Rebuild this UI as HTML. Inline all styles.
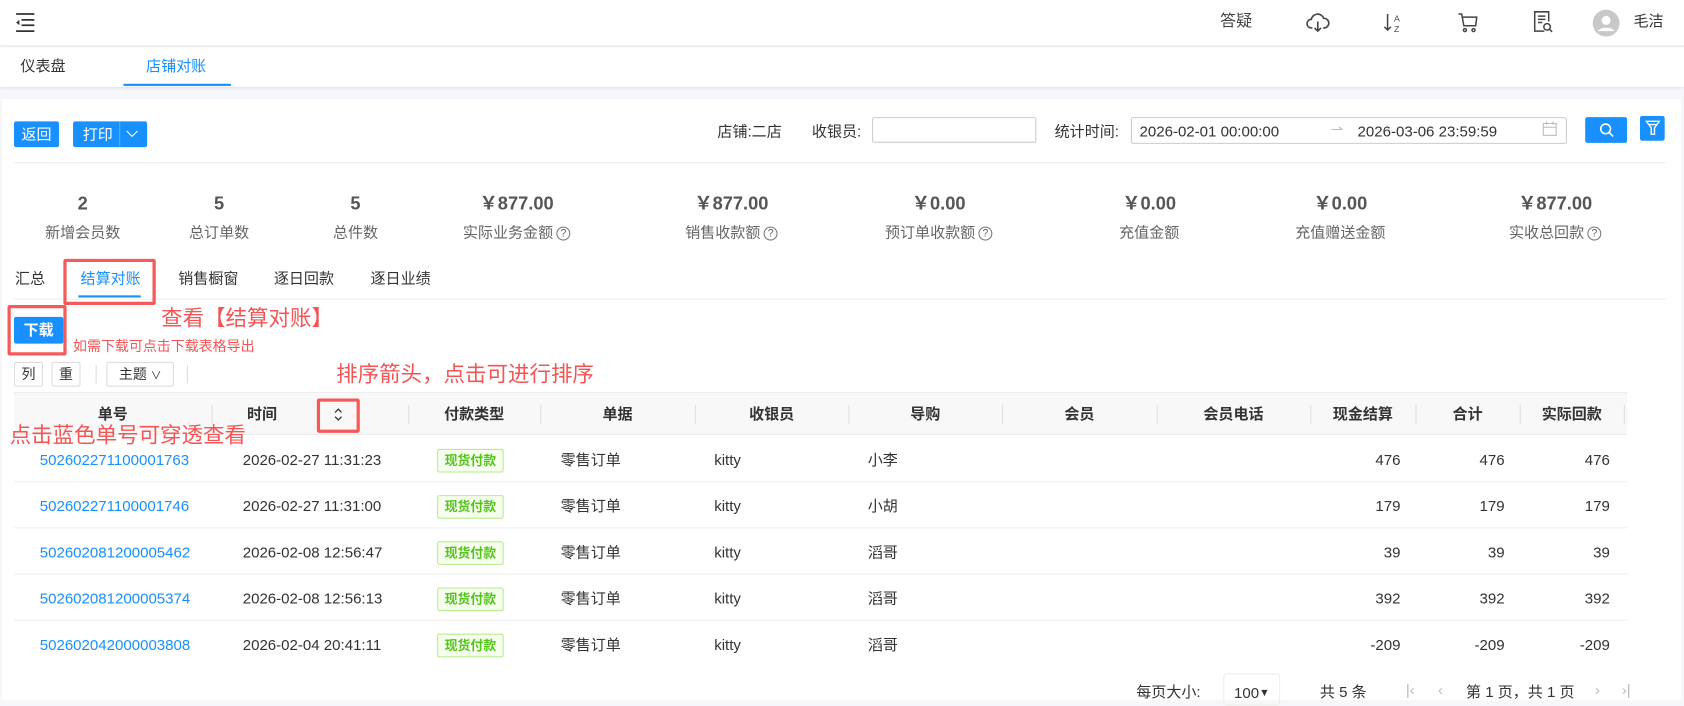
<!DOCTYPE html>
<html><head><meta charset="utf-8">
<style>
*{box-sizing:border-box;margin:0;padding:0}
html,body{width:1684px;height:699px;overflow:hidden;background:#f5f7fa}
#w{position:absolute;left:0;top:0;width:1568px;height:651px;transform:scale(1.07398);transform-origin:0 0;font-family:"Liberation Sans","Noto Sans CJK SC",sans-serif;font-size:14px;color:#333;line-height:1.2}
.a{position:absolute;white-space:nowrap}
.btn{position:absolute;background:#1890ff;color:#fff;border-radius:2px;text-align:center;font-size:14px}
.red{position:absolute;border:3px solid #f55a5a;border-radius:2px}
.rt{position:absolute;color:#f55454;white-space:nowrap}
.sc{position:absolute;width:160px;text-align:center}
.sc .n{font-size:17px;color:#555;font-weight:bold;height:22px}
.sc .l{font-size:14px;color:#666;margin-top:6px}
.q{display:inline-block;width:13px;height:13px;border:1px solid #777;border-radius:50%;font-size:10px;line-height:11px;text-align:center;vertical-align:1px;margin-left:3px}
.th{position:absolute;top:365px;height:40px;line-height:40px;font-weight:bold;text-align:center;font-size:14px;color:#333}
.sep{position:absolute;top:377px;width:1px;height:18px;background:#e0e0e0}
.tag{position:absolute;border:1px solid #b7eb8f;background:#f6ffed;color:#52c41a;font-size:12px;font-weight:bold;height:22px;line-height:20px;padding:0 6px;border-radius:2px}
.tb{position:absolute;height:23px;border:1px solid #ddd;border-radius:2px;background:#fff;font-size:13px;line-height:21px;text-align:center}
</style></head><body><div id="w">
<div class="a" style="left:0;top:0;width:1568px;height:42px;background:#fff;box-shadow:0 1px 3px rgba(0,0,0,.08)"></div>
<svg class="a" style="left:14px;top:11px" width="20" height="20" viewBox="0 0 20 20"><path d="M1 2h17M6 7.5h12M6 12.5h12M1 18h17" stroke="#333" stroke-width="1.6"/><path d="M1 10l3-2.5v5z" fill="#333"/></svg>
<div class="a" style="left:1136px;top:11px;font-size:15px;color:#444">答疑</div>
<svg class="a" style="left:1216px;top:10px" width="22" height="22" viewBox="0 0 22 22" fill="none" stroke="#444" stroke-width="1.5"><path d="M6 16H5a4 4 0 0 1 0-8 6 6 0 0 1 11.5-1A4.5 4.5 0 0 1 17 16h-1"/><path d="M11 10v9M8 16l3 3 3-3"/></svg>
<svg class="a" style="left:1287px;top:10px" width="22" height="22" viewBox="0 0 22 22" fill="none" stroke="#444" stroke-width="1.4"><path d="M5 3v15M2 15l3 3 3-3"/><text x="11" y="10" font-size="8" fill="#444" stroke="none" font-family="Liberation Sans">A</text><text x="11" y="20" font-size="8" fill="#444" stroke="none" font-family="Liberation Sans">Z</text></svg>
<svg class="a" style="left:1356px;top:10px" width="22" height="22" viewBox="0 0 22 22" fill="none" stroke="#444" stroke-width="1.4"><path d="M2 3h3l2 11h11l1-8H6"/><circle cx="8" cy="18" r="1.4"/><circle cx="16" cy="18" r="1.4"/></svg>
<svg class="a" style="left:1426px;top:9px" width="22" height="24" viewBox="0 0 22 24" fill="none" stroke="#444" stroke-width="1.4"><path d="M12 20H3V2h13v9"/><path d="M6 6h7M6 9h7M6 12h4"/><circle cx="14.5" cy="16" r="3"/><path d="M16.7 18.2l2.5 2.5"/></svg>
<svg class="a" style="left:1483px;top:9px" width="25" height="25" viewBox="0 0 25 25"><circle cx="12.5" cy="12.5" r="12.5" fill="#c8c8c8"/><circle cx="12.5" cy="10" r="4.2" fill="#fff"/><path d="M4.5 20a9 6 0 0 1 16 0z" fill="#fff"/></svg>
<div class="a" style="left:1521px;top:11px;font-size:14px;color:#333">毛洁</div>
<div class="a" style="left:0;top:44px;width:1568px;height:37px;background:#fff;box-shadow:0 1px 3px rgba(0,0,0,.1)"></div>
<div class="a" style="left:19px;top:53px;font-size:14px;color:#333">仪表盘</div>
<div class="a" style="left:136px;top:53px;font-size:14px;color:#1890ff">店铺对账</div>
<div class="a" style="left:115px;top:78px;width:100px;height:2px;background:#1890ff"></div>
<div class="a" style="left:2px;top:92px;width:1563px;height:560px;background:#fff"></div>
<div class="btn" style="left:13px;top:113px;width:42px;height:24px;line-height:24px">返回</div>
<div class="btn" style="left:68px;top:113px;width:69px;height:24px;line-height:24px;text-align:left;padding-left:9px">打印<span style="position:absolute;left:43px;top:0;width:1px;height:24px;background:#5ab0ff"></span><svg style="position:absolute;left:49px;top:8px" width="12" height="8" viewBox="0 0 12 8"><path d="M1 1l5 5 5-5" stroke="#fff" fill="none"/></svg></div>
<div class="a" style="left:668px;top:114px">店铺:二店</div>
<div class="a" style="left:756px;top:114px">收银员:</div>
<div class="a" style="left:812px;top:109px;width:153px;height:24px;border:1px solid #ccc;border-radius:2px"></div>
<div class="a" style="left:982px;top:114px">统计时间:</div>
<div class="a" style="left:1053px;top:109px;width:406px;height:25px;border:1px solid #ccc;border-radius:2px"></div>
<div class="a" style="left:1061px;top:114px">2026-02-01 00:00:00</div>
<div class="a" style="left:1239px;top:112px;color:#bbb">⇀</div>
<div class="a" style="left:1264px;top:114px">2026-03-06 23:59:59</div>
<svg class="a" style="left:1436px;top:113px" width="14" height="15" viewBox="0 0 14 15" fill="none" stroke="#bbb"><rect x="1" y="2" width="12" height="11"/><path d="M1 5.5h12M4 0v3M10 0v3"/></svg>
<div class="btn" style="left:1476px;top:109px;width:39px;height:24px"><svg style="margin-top:5px" width="14" height="14" viewBox="0 0 14 14" fill="none" stroke="#fff" stroke-width="1.5"><circle cx="6" cy="6" r="4.5"/><path d="M9.5 9.5l3.5 3.5"/></svg></div>
<div class="btn" style="left:1527px;top:108px;width:23px;height:23px"><svg style="margin-top:4px" width="14" height="15" viewBox="0 0 14 15" fill="none" stroke="#fff" stroke-width="1.3"><path d="M1 1h12L8.5 7v6h-3V7z"/><path d="M3 4h8"/></svg></div>
<div class="a" style="left:13px;top:151px;width:1538px;height:1px;background:#eee"></div>
<div class="sc" style="left:-3px;top:180px"><div class="n">2</div><div class="l">新增会员数</div></div>
<div class="sc" style="left:124px;top:180px"><div class="n">5</div><div class="l">总订单数</div></div>
<div class="sc" style="left:251px;top:180px"><div class="n">5</div><div class="l">总件数</div></div>
<div class="sc" style="left:401px;top:180px"><div class="n">￥877.00</div><div class="l">实际业务金额<span class="q">?</span></div></div>
<div class="sc" style="left:601px;top:180px"><div class="n">￥877.00</div><div class="l">销售收款额<span class="q">?</span></div></div>
<div class="sc" style="left:794px;top:180px"><div class="n">￥0.00</div><div class="l">预订单收款额<span class="q">?</span></div></div>
<div class="sc" style="left:990px;top:180px"><div class="n">￥0.00</div><div class="l">充值金额</div></div>
<div class="sc" style="left:1168px;top:180px"><div class="n">￥0.00</div><div class="l">充值赠送金额</div></div>
<div class="sc" style="left:1368px;top:180px"><div class="n">￥877.00</div><div class="l">实收总回款<span class="q">?</span></div></div>
<div class="a" style="left:14px;top:251px">汇总</div>
<div class="a" style="left:75px;top:251px;color:#1890ff">结算对账</div>
<div class="a" style="left:73px;top:275px;width:58px;height:2px;background:#1890ff"></div>
<div class="a" style="left:166px;top:251px">销售橱窗</div>
<div class="a" style="left:255px;top:251px">逐日回款</div>
<div class="a" style="left:345px;top:251px">逐日业绩</div>
<div class="a" style="left:13px;top:278px;width:1538px;height:1px;background:#eee"></div>
<div class="red" style="left:59px;top:241px;width:86px;height:43px"></div>
<div class="rt" style="left:150px;top:285px;font-size:20px">查看【结算对账】</div>
<div class="btn" style="left:13px;top:295px;width:46px;height:25px;line-height:25px;font-weight:bold">下载</div>
<div class="red" style="left:7px;top:284px;width:55px;height:47px"></div>
<div class="rt" style="left:68px;top:315px;font-size:13px">如需下载可点击下载表格导出</div>
<div class="tb" style="left:13px;top:337px;width:27px">列</div>
<div class="tb" style="left:48px;top:337px;width:27px">重</div>
<div class="a" style="left:89px;top:340px;width:1px;height:17px;background:#ddd"></div>
<div class="tb" style="left:99px;top:337px;width:63px">主题 <span style="font-size:10px">∨</span></div>
<div class="a" style="left:174px;top:340px;width:1px;height:17px;background:#ddd"></div>
<div class="rt" style="left:313px;top:337px;font-size:20px">排序箭头，点击可进行排序</div>
<div class="a" style="left:13px;top:365px;width:1502px;height:40px;background:#f8f8f9;border-top:1px solid #eee;border-bottom:1px solid #eee"></div>
<div class="th" style="left:13px;width:184px">单号</div>
<div class="th" style="left:230px;width:40px;text-align:left">时间</div>
<div class="th" style="left:380px;width:123px">付款类型</div>
<div class="th" style="left:503px;width:144px">单据</div>
<div class="th" style="left:647px;width:143px">收银员</div>
<div class="th" style="left:790px;width:143px">导购</div>
<div class="th" style="left:933px;width:144px">会员</div>
<div class="th" style="left:1077px;width:143px">会员电话</div>
<div class="th" style="left:1220px;width:98px">现金结算</div>
<div class="th" style="left:1318px;width:97px">合计</div>
<div class="th" style="left:1415px;width:97px">实际回款</div>
<div class="sep" style="left:197px"></div><div class="sep" style="left:380px"></div><div class="sep" style="left:503px"></div><div class="sep" style="left:647px"></div><div class="sep" style="left:790px"></div><div class="sep" style="left:933px"></div><div class="sep" style="left:1077px"></div><div class="sep" style="left:1220px"></div><div class="sep" style="left:1318px"></div><div class="sep" style="left:1415px"></div><div class="sep" style="left:1512px"></div>
<svg class="a" style="left:310px;top:379px" width="10" height="14" viewBox="0 0 10 14" fill="none" stroke="#333" stroke-width="1.2"><path d="M2 5l3-3 3 3M2 9l3 3 3-3"/></svg>
<div class="red" style="left:295px;top:371px;width:40px;height:32px"></div>
<div class="rt" style="left:9px;top:394px;font-size:20px">点击蓝色单号可穿透查看</div>
<div class="a" style="left:37px;top:420px;color:#1890ff">502602271100001763</div>
<div class="a" style="left:37px;top:463px;color:#1890ff">502602271100001746</div>
<div class="a" style="left:37px;top:506px;color:#1890ff">502602081200005462</div>
<div class="a" style="left:37px;top:549px;color:#1890ff">502602081200005374</div>
<div class="a" style="left:37px;top:592px;color:#1890ff">502602042000003808</div>
<div class="a" style="left:226px;top:420px">2026-02-27 11:31:23</div>
<div class="a" style="left:226px;top:463px">2026-02-27 11:31:00</div>
<div class="a" style="left:226px;top:506px">2026-02-08 12:56:47</div>
<div class="a" style="left:226px;top:549px">2026-02-08 12:56:13</div>
<div class="a" style="left:226px;top:592px">2026-02-04 20:41:11</div>
<div class="tag" style="left:407px;top:418px">现货付款</div>
<div class="tag" style="left:407px;top:461px">现货付款</div>
<div class="tag" style="left:407px;top:504px">现货付款</div>
<div class="tag" style="left:407px;top:547px">现货付款</div>
<div class="tag" style="left:407px;top:590px">现货付款</div>
<div class="a" style="left:522px;top:420px">零售订单</div><div class="a" style="left:522px;top:463px">零售订单</div><div class="a" style="left:522px;top:506px">零售订单</div><div class="a" style="left:522px;top:549px">零售订单</div><div class="a" style="left:522px;top:592px">零售订单</div>
<div class="a" style="left:665px;top:420px">kitty</div><div class="a" style="left:665px;top:463px">kitty</div><div class="a" style="left:665px;top:506px">kitty</div><div class="a" style="left:665px;top:549px">kitty</div><div class="a" style="left:665px;top:592px">kitty</div>
<div class="a" style="left:808px;top:420px">小李</div><div class="a" style="left:808px;top:463px">小胡</div><div class="a" style="left:808px;top:506px">滔哥</div><div class="a" style="left:808px;top:549px">滔哥</div><div class="a" style="left:808px;top:592px">滔哥</div>
<div class="a" style="left:1220px;top:420px;width:84px;text-align:right">476</div><div class="a" style="left:1318px;top:420px;width:83px;text-align:right">476</div><div class="a" style="left:1415px;top:420px;width:84px;text-align:right">476</div>
<div class="a" style="left:1220px;top:463px;width:84px;text-align:right">179</div><div class="a" style="left:1318px;top:463px;width:83px;text-align:right">179</div><div class="a" style="left:1415px;top:463px;width:84px;text-align:right">179</div>
<div class="a" style="left:1220px;top:506px;width:84px;text-align:right">39</div><div class="a" style="left:1318px;top:506px;width:83px;text-align:right">39</div><div class="a" style="left:1415px;top:506px;width:84px;text-align:right">39</div>
<div class="a" style="left:1220px;top:549px;width:84px;text-align:right">392</div><div class="a" style="left:1318px;top:549px;width:83px;text-align:right">392</div><div class="a" style="left:1415px;top:549px;width:84px;text-align:right">392</div>
<div class="a" style="left:1220px;top:592px;width:84px;text-align:right">-209</div><div class="a" style="left:1318px;top:592px;width:83px;text-align:right">-209</div><div class="a" style="left:1415px;top:592px;width:84px;text-align:right">-209</div>
<div class="a" style="left:13px;top:448px;width:1502px;height:1px;background:#f0f0f0"></div>
<div class="a" style="left:13px;top:491px;width:1502px;height:1px;background:#f0f0f0"></div>
<div class="a" style="left:13px;top:534px;width:1502px;height:1px;background:#f0f0f0"></div>
<div class="a" style="left:13px;top:577px;width:1502px;height:1px;background:#f0f0f0"></div>
<div class="a" style="left:1058px;top:636px">每页大小:</div>
<div class="a" style="left:1139px;top:627px;width:53px;height:30px;border:1px solid #eee;border-radius:3px;padding:9px 0 0 9px">100<span style="font-size:10px;vertical-align:2px">▼</span></div>
<div class="a" style="left:1229px;top:636px">共 5 条</div>
<div class="a" style="left:1309px;top:634px;color:#bbb">|‹</div>
<div class="a" style="left:1339px;top:634px;color:#bbb">‹</div>
<div class="a" style="left:1365px;top:636px">第 1 页，共 1 页</div>
<div class="a" style="left:1485px;top:634px;color:#bbb">›</div>
<div class="a" style="left:1510px;top:634px;color:#bbb">›|</div>
</div></body></html>
